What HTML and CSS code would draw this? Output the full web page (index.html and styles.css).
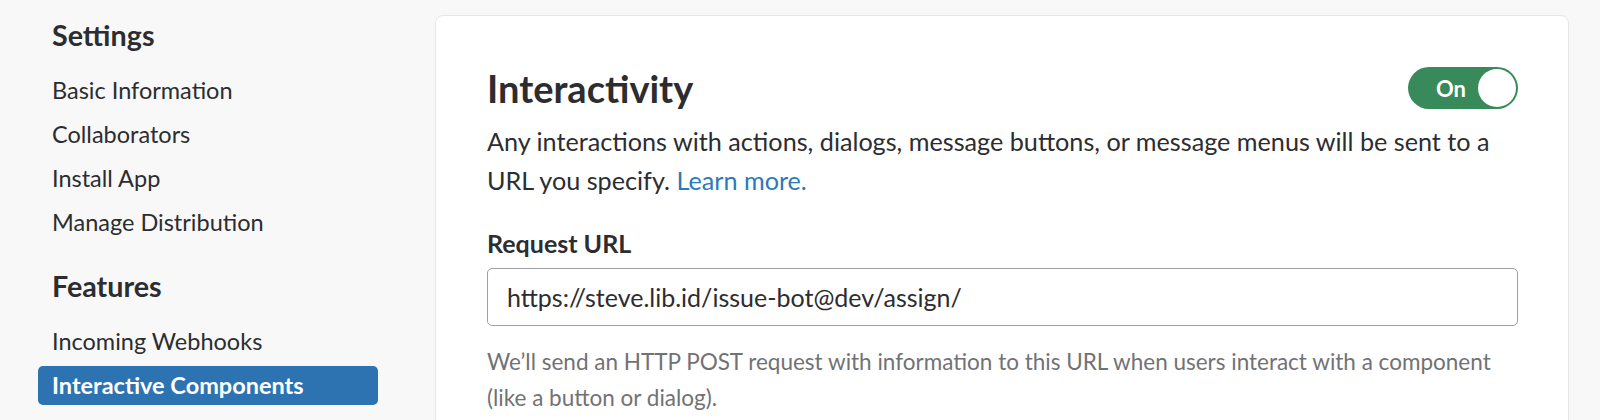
FILE: index.html
```html
<!DOCTYPE html>
<html lang="en">
<head>
<meta charset="utf-8">
<title>Interactive Components</title>
<link rel="stylesheet" href="styles.css">
</head>
<body>
<div class="page">
  <nav class="sidebar">
    <div class="section">
      <h2 class="section-title">Settings</h2>
      <a class="nav-item" href="#">Basic Information</a>
      <a class="nav-item" href="#">Collaborators</a>
      <a class="nav-item" href="#">Install App</a>
      <a class="nav-item" href="#">Manage Distribution</a>
    </div>
    <div class="section">
      <h2 class="section-title">Features</h2>
      <a class="nav-item" href="#">Incoming Webhooks</a>
      <a class="nav-item active" href="#">Interactive Components</a>
      <a class="nav-item" href="#">Slash Commands</a>
    </div>
  </nav>
  <main class="card">
    <div class="card-head">
      <h1 class="title">Interactivity</h1>
      <button class="toggle" type="button"><span class="toggle-label">On</span><span class="knob"></span></button>
    </div>
    <p class="desc">Any interactions with actions, dialogs, message buttons, or message menus will be sent to a URL you specify. <a class="link" href="#">Learn more.</a></p>
    <label class="field-label" for="url">Request URL</label>
    <input class="field" id="url" type="text" value="https://steve.lib.id/issue-bot@dev/assign/">
    <p class="help">We’ll send an HTTP POST request with information to this URL when users interact with a component (like a button or dialog).</p>
  </main>
</div>
</body>
</html>
```
FILE: styles.css
```css
* { box-sizing: border-box; }
html, body { margin: 0; padding: 0; }
body {
  background: #f8f8f8;
  font-family: Lato, "Open Sans", sans-serif;
  color: #2c2d30;
  height: 420px;
  overflow: hidden;
}
.page {
  display: flex;
  align-items: flex-start;
}
.sidebar {
  width: 435px;
  flex: none;
  padding: 19px 0 0 38px;
  display: flex;
  flex-direction: column;
  gap: 28px;
}
.section {
  display: flex;
  flex-direction: column;
  gap: 5px;
  width: 340px;
}
.section-title {
  margin: 0 0 15px 14px;
  font-size: 28.7px;
  line-height: 32px;
  font-weight: 700;
  color: #2c2d30;
}
.nav-item {
  display: block;
  height: 39px;
  line-height: 39px;
  padding-left: 14px;
  font-size: 23.5px;
  color: #2c2d30;
  text-decoration: none;
  border-radius: 5px;
  white-space: nowrap;
}
.nav-item.active {
  background: #2d73b1;
  color: #fff;
  font-weight: 700;
}
.card {
  margin-top: 15px;
  width: 1134px;
  flex: none;
  height: 460px;
  background: #fff;
  border: 1px solid #e6e6e6;
  border-radius: 8px;
  padding: 50px 50px 0 51px;
}
.card-head {
  display: flex;
  justify-content: space-between;
  align-items: flex-start;
}
.title {
  margin: 0;
  font-size: 38px;
  line-height: 44px;
  font-weight: 700;
  color: #2c2d30;
}
.toggle {
  width: 110px;
  height: 42px;
  margin-top: 1px;
  border: none;
  border-radius: 21px;
  background: #388a5a;
  padding: 0 2px 0 28px;
  display: flex;
  align-items: center;
  justify-content: space-between;
  cursor: pointer;
  font-family: inherit;
}
.toggle-label {
  color: #fff;
  font-weight: 700;
  font-size: 22px;
}
.knob {
  width: 38px;
  height: 38px;
  border-radius: 50%;
  background: #fff;
}
.desc {
  margin: 12px 0 0;
  font-size: 25.2px;
  line-height: 39px;
  color: #2c2d30;
}
.link {
  color: #2a7ab9;
  text-decoration: none;
}
.field-label {
  display: block;
  margin-top: 28px;
  font-size: 25px;
  line-height: 30px;
  font-weight: 700;
}
.field {
  display: block;
  margin-top: 10px;
  width: 100%;
  height: 58px;
  border: 1px solid #a0a0a2;
  border-radius: 5px;
  padding: 0 19px;
  font-family: inherit;
  font-size: 25px;
  color: #2c2d30;
  background: #fff;
}
.help {
  margin: 18px 0 0;
  font-size: 22.5px;
  line-height: 36px;
  color: #717274;
}
```
